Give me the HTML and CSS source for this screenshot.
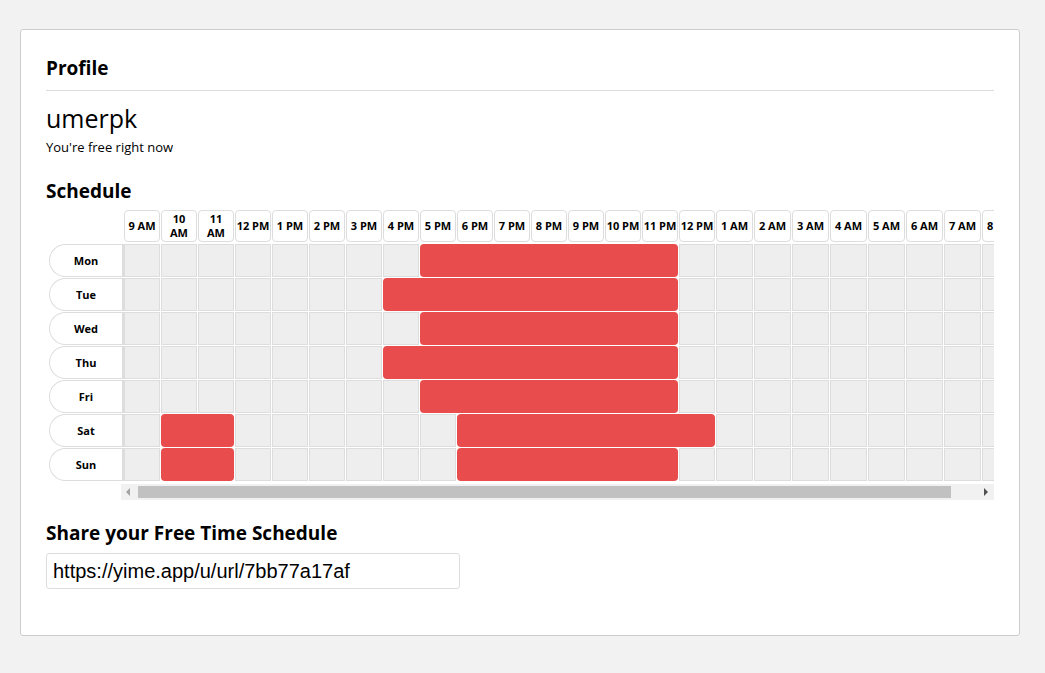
FILE: index.html
```html
<!DOCTYPE html>
<html lang="en">
<head>
<meta charset="utf-8">
<title>Profile</title>
<link rel="stylesheet" href="styles.css">
</head>
<body>
<div class="card">
  <h2 class="title">Profile</h2>
  <div class="user">umerpk</div>
  <div class="status">You're free right now</div>

  <h3 class="section">Schedule</h3>
  <div class="sched">
    <div class="days">
      <div class="day">Mon</div>
      <div class="day">Tue</div>
      <div class="day">Wed</div>
      <div class="day">Thu</div>
      <div class="day">Fri</div>
      <div class="day">Sat</div>
      <div class="day">Sun</div>
    </div>
    <div class="viewport">
      <div class="row head">
        <div class="hc">9 AM</div><div class="hc">10<br>AM</div><div class="hc">11<br>AM</div><div class="hc">12 PM</div><div class="hc">1 PM</div><div class="hc">2 PM</div><div class="hc">3 PM</div><div class="hc">4 PM</div><div class="hc">5 PM</div><div class="hc">6 PM</div><div class="hc">7 PM</div><div class="hc">8 PM</div><div class="hc">9 PM</div><div class="hc">10 PM</div><div class="hc">11 PM</div><div class="hc">12 PM</div><div class="hc">1 AM</div><div class="hc">2 AM</div><div class="hc">3 AM</div><div class="hc">4 AM</div><div class="hc">5 AM</div><div class="hc">6 AM</div><div class="hc">7 AM</div><div class="hc">8 AM</div>
      </div>
      <!-- Mon -->
      <div class="row">
        <i class="c"></i><i class="c"></i><i class="c"></i><i class="c"></i><i class="c"></i><i class="c"></i><i class="c"></i><i class="c"></i>
        <b class="bar span7"></b>
        <i class="c"></i><i class="c"></i><i class="c"></i><i class="c"></i><i class="c"></i><i class="c"></i><i class="c"></i><i class="c"></i><i class="c"></i>
      </div>
      <!-- Tue -->
      <div class="row">
        <i class="c"></i><i class="c"></i><i class="c"></i><i class="c"></i><i class="c"></i><i class="c"></i><i class="c"></i>
        <b class="bar span8"></b>
        <i class="c"></i><i class="c"></i><i class="c"></i><i class="c"></i><i class="c"></i><i class="c"></i><i class="c"></i><i class="c"></i><i class="c"></i>
      </div>
      <!-- Wed -->
      <div class="row">
        <i class="c"></i><i class="c"></i><i class="c"></i><i class="c"></i><i class="c"></i><i class="c"></i><i class="c"></i><i class="c"></i>
        <b class="bar span7"></b>
        <i class="c"></i><i class="c"></i><i class="c"></i><i class="c"></i><i class="c"></i><i class="c"></i><i class="c"></i><i class="c"></i><i class="c"></i>
      </div>
      <!-- Thu -->
      <div class="row">
        <i class="c"></i><i class="c"></i><i class="c"></i><i class="c"></i><i class="c"></i><i class="c"></i><i class="c"></i>
        <b class="bar span8"></b>
        <i class="c"></i><i class="c"></i><i class="c"></i><i class="c"></i><i class="c"></i><i class="c"></i><i class="c"></i><i class="c"></i><i class="c"></i>
      </div>
      <!-- Fri -->
      <div class="row">
        <i class="c"></i><i class="c"></i><i class="c"></i><i class="c"></i><i class="c"></i><i class="c"></i><i class="c"></i><i class="c"></i>
        <b class="bar span7"></b>
        <i class="c"></i><i class="c"></i><i class="c"></i><i class="c"></i><i class="c"></i><i class="c"></i><i class="c"></i><i class="c"></i><i class="c"></i>
      </div>
      <!-- Sat -->
      <div class="row">
        <i class="c"></i>
        <b class="bar span2"></b>
        <i class="c"></i><i class="c"></i><i class="c"></i><i class="c"></i><i class="c"></i><i class="c"></i>
        <b class="bar span7"></b>
        <i class="c"></i><i class="c"></i><i class="c"></i><i class="c"></i><i class="c"></i><i class="c"></i><i class="c"></i><i class="c"></i>
      </div>
      <!-- Sun -->
      <div class="row">
        <i class="c"></i>
        <b class="bar span2"></b>
        <i class="c"></i><i class="c"></i><i class="c"></i><i class="c"></i><i class="c"></i><i class="c"></i>
        <b class="bar span6"></b>
        <i class="c"></i><i class="c"></i><i class="c"></i><i class="c"></i><i class="c"></i><i class="c"></i><i class="c"></i><i class="c"></i><i class="c"></i>
      </div>
    </div>
  </div>
  <div class="hscroll">
    <span class="arrow left"></span>
    <span class="thumb"></span>
    <span class="arrow right"></span>
  </div>

  <h3 class="section share">Share your Free Time Schedule</h3>
  <input class="url" type="text" value="https://yime.app/u/url/7bb77a17af" readonly>
</div>
</body>
</html>
```
FILE: styles.css
```css
html, body {
  margin: 0;
  padding: 0;
}
body {
  background: #f2f2f2;
  font-family: "Open Sans", "Noto Sans", sans-serif;
  color: #000;
  padding: 29px 26px 0 20px;
}
.card {
  background: #fff;
  border: 1px solid #cccccc;
  border-radius: 3px;
  width: 998px;
  box-sizing: content-box;
  padding: 0;
}
.card > * {
  margin-left: 25px;
  margin-right: 25px;
}
.title {
  font-size: 19px;
  font-weight: 700;
  line-height: 26px;
  margin: 0 25px;
  padding: 25px 0 9px;
  border-bottom: 1px solid #dddddd;
}
.user {
  font-size: 25px;
  line-height: 34px;
  margin-top: 10px;
}
.status {
  font-size: 13px;
  line-height: 18px;
  margin-top: 3px;
}
.section {
  font-size: 19px;
  font-weight: 700;
  line-height: 26px;
  margin-top: 22px;
  margin-bottom: 6px;
}
.sched {
  display: flex;
}
.days {
  width: 75px;
  flex: none;
  margin-left: 3px;
  padding-top: 34px;
  display: flex;
  flex-direction: column;
  gap: 1px;
}
.day {
  height: 31px;
  border: 1px solid #dddddd;
  border-right-width: 2px;
  border-radius: 17px 0 0 17px;
  box-sizing: content-box;
  width: 72px;
  display: flex;
  align-items: center;
  justify-content: center;
  font-size: 11px;
  font-weight: 700;
}
.viewport {
  flex: 1;
  min-width: 0;
  overflow: hidden;
  display: flex;
  flex-direction: column;
  gap: 1px;
}
.row {
  display: flex;
  gap: 1px;
  height: 33px;
  flex: none;
}
.row.head {
  height: 32px;
  margin-bottom: 1px;
}
.hc {
  flex: none;
  width: 34px;
  height: 30px;
  border: 1px solid #dddddd;
  border-radius: 4px;
  background: #fff;
  font-size: 11px;
  font-weight: 700;
  line-height: 14px;
  text-align: center;
  display: flex;
  align-items: center;
  justify-content: center;
  white-space: nowrap;
}
.c {
  flex: none;
  width: 34px;
  height: 31px;
  border: 1px solid #dddddd;
  background: #eeeeee;
}
/* the night columns (1 AM – 8 AM) are a pixel wider */
.row > :nth-last-child(-n+8) {
  width: 35px;
}
.bar {
  flex: none;
  height: 33px;
  background: #e84c4c;
  border-radius: 4px;
}
.span2 { width: 73px; }
.span6 { width: 221px; }
.span7 { width: 258px; }
.span8 { width: 295px; }

.hscroll {
  margin-left: 100px;
  margin-top: 3px;
  height: 16px;
  background: #f1f1f1;
  position: relative;
}
.thumb {
  position: absolute;
  left: 17px;
  width: 813px;
  top: 2px;
  height: 12px;
  background: #c1c1c1;
}
.arrow {
  position: absolute;
  top: 4px;
  width: 0;
  height: 0;
  border-top: 4px solid transparent;
  border-bottom: 4px solid transparent;
}
.arrow.left {
  left: 5px;
  border-right: 4px solid #a3a3a3;
}
.arrow.right {
  right: 6px;
  border-left: 4px solid #505050;
}
.share {
  margin-top: 20px;
  margin-bottom: 7px;
}
.url {
  display: block;
  width: 414px;
  height: 36px;
  box-sizing: border-box;
  border: 1px solid #dddddd;
  border-radius: 3px;
  padding: 0 6px;
  font-family: "Liberation Sans", Arial, sans-serif;
  font-size: 20px;
  color: #000;
  margin-bottom: 46px;
  outline: none;
}
```
